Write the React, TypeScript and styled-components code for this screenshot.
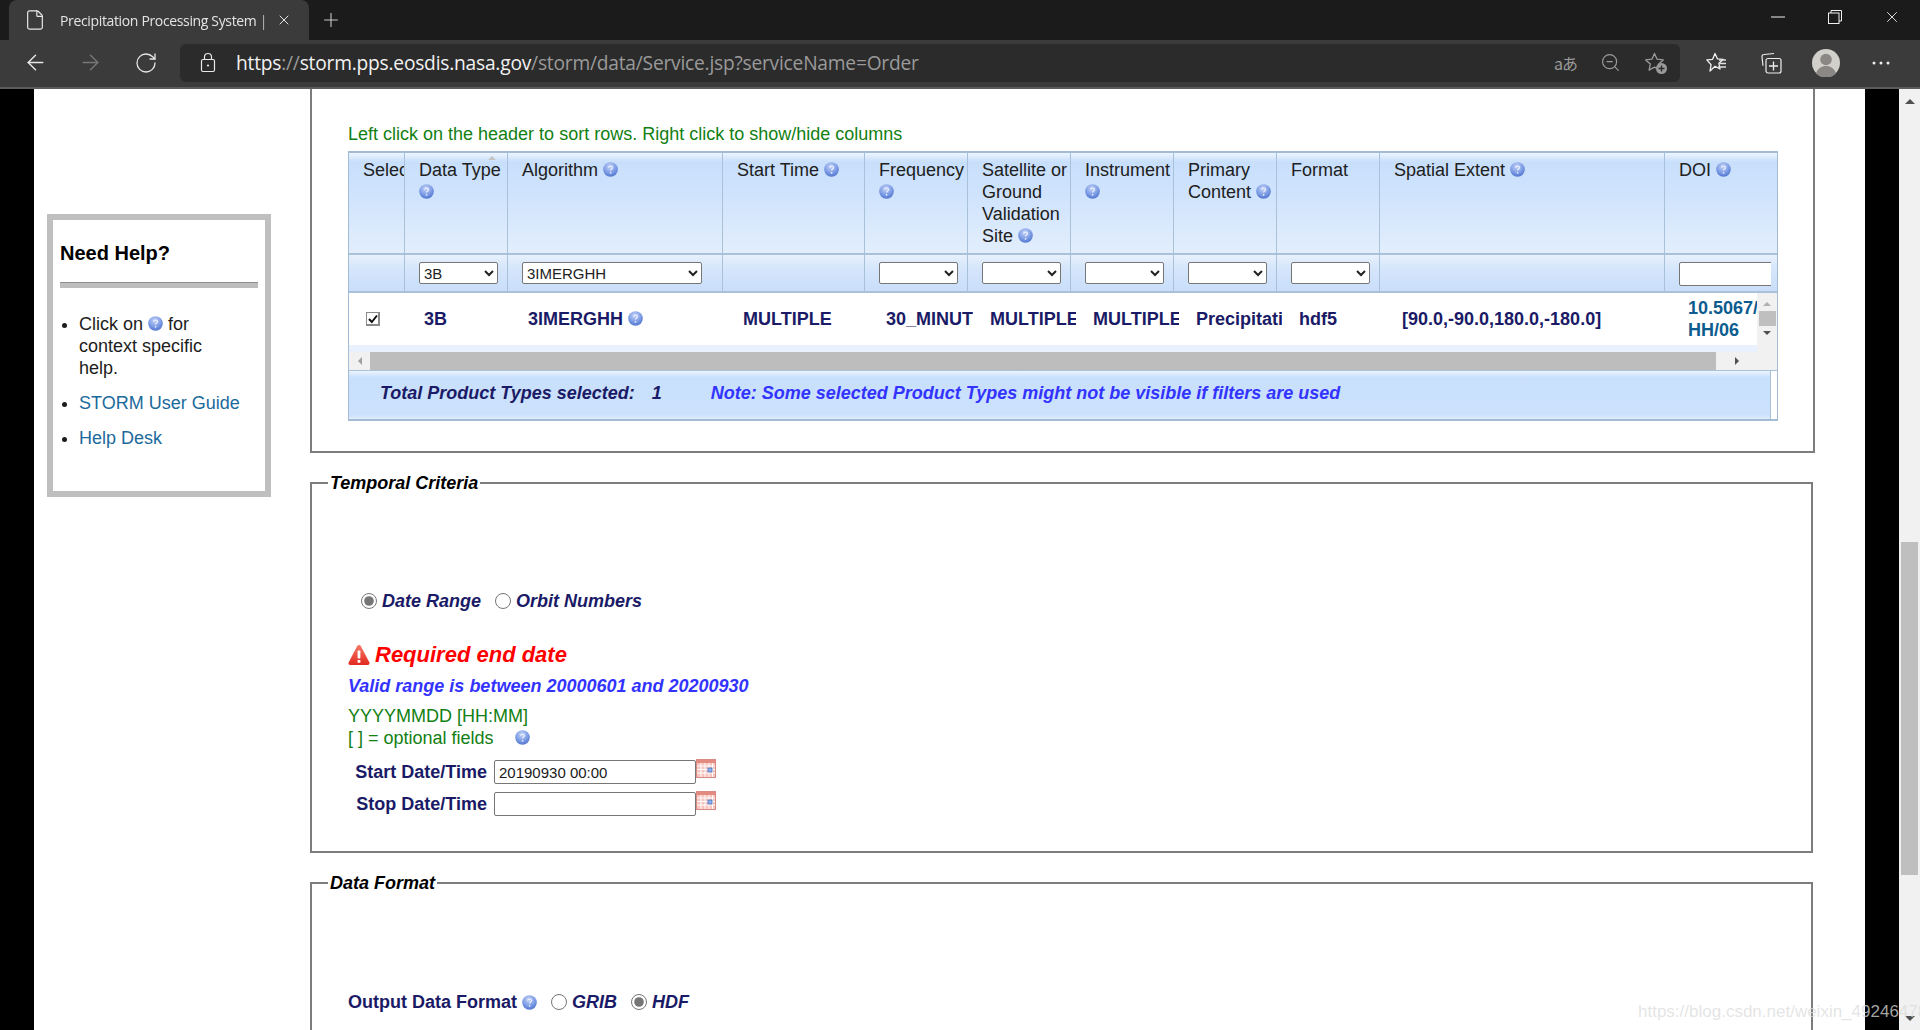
import React from "react";
import styled, { createGlobalStyle } from "styled-components";
import { ArrowLeft, ArrowRight, File as FileIcon, Plus, RotateCw, X, ZoomOut } from "lucide-react";

const Global = createGlobalStyle`
  html, body { margin: 0; padding: 0; height: 100%; overflow: hidden; background: #000; }
  body { font-family: "Liberation Sans", Arial, sans-serif; }
  * { box-sizing: border-box; }
`;

const Root = styled.div`
  position: relative;
  width: 1920px;
  height: 1030px;
  display: flex;
  flex-direction: column;
  overflow: hidden;
`;

/* ---------- browser chrome ---------- */
const TitleBar = styled.div`
  height: 40px;
  background: #1b1b1b;
  display: flex;
  align-items: stretch;
  color: #e8e8e8;
`;
const Tab = styled.div`
  margin-left: 9px;
  width: 300px;
  background: #3b3b3b;
  border-radius: 8px 8px 0 0;
  display: flex;
  align-items: center;
  padding: 0 14px 0 15px;
`;
const TabTitle = styled.span`
  margin-left: 14px;
  width: 216px;
  font: 14px "Open Sans", sans-serif;
  letter-spacing: -0.35px;
  color: #e4e4e4;
  white-space: nowrap;
  overflow: hidden;
  -webkit-mask-image: linear-gradient(90deg, #000 92%, transparent);
`;
const NewTab = styled.div`
  margin-left: 11px;
  display: flex;
  align-items: center;
  color: #c8c8c8;
`;
const WindowControls = styled.div`
  margin-left: auto;
  display: flex;
`;
const WindowButton = styled.div`
  width: 57px;
  display: flex;
  align-items: center;
  justify-content: center;
  padding-bottom: 6px;
  color: #f0f0f0;
`;
const Toolbar = styled.div`
  height: 49px;
  background: #3b3b3b;
  border-bottom: 2px solid #5c5c5c;
  display: flex;
  align-items: center;
  padding: 0 7px 2px 8px;
`;
const ToolButton = styled.div<{ $dim?: boolean }>`
  width: 55px;
  display: flex;
  align-items: center;
  justify-content: center;
  color: ${(p) => (p.$dim ? "#777" : "#e6e6e6")};
`;
const AddressBar = styled.div`
  margin: 0 8px 0 7px;
  width: 1500px;
  height: 38px;
  background: #2b2b2b;
  border-radius: 6px;
  display: flex;
  align-items: center;
  padding: 0 2px 0 20px;
`;
const Url = styled.div`
  margin-left: 20px;
  font: 19.2px "Open Sans", sans-serif;
  letter-spacing: -0.22px;
  color: #9a9a9a;
  white-space: nowrap;
`;
const UrlStrong = styled.span`
  color: #f2f2f2;
`;
const AddressIcons = styled.div`
  margin-left: auto;
  display: flex;
`;
const AddressIcon = styled.div`
  width: 45px;
  display: flex;
  align-items: center;
  justify-content: center;
  color: #9a9a9a;
`;
const TranslateGlyph = styled.span`
  font: 16px "Noto Sans CJK JP", "Noto Sans", sans-serif;
  letter-spacing: -1px;
  color: #9a9a9a;
`;

/* ---------- page ---------- */
const Viewport = styled.div`
  flex: 1;
  min-height: 0;
  display: flex;
  background: #000;
`;
const WhitePage = styled.div`
  margin-left: 34px;
  width: 1831px;
  background: #fff;
  display: flex;
  overflow: hidden;
`;
const PageScroll = styled.div`
  margin-left: 34px;
  width: 21px;
  background: #f1f1f1;
  display: flex;
  flex-direction: column;
  align-items: center;
`;
const Tri = styled.span<{ $dir: "up" | "down" | "left" | "right"; $size?: number; $color?: string }>`
  display: block;
  width: 0;
  height: 0;
  border: ${(p) => p.$size ?? 5}px solid transparent;
  ${(p) => {
    const c = p.$color ?? "#505050";
    const s = p.$size ?? 5;
    if (p.$dir === "up") return `border-top-width:0;border-bottom:${s}px solid ${c};`;
    if (p.$dir === "down") return `border-bottom-width:0;border-top:${s}px solid ${c};`;
    if (p.$dir === "left") return `border-left-width:0;border-right:${s}px solid ${c};`;
    return `border-right-width:0;border-left:${s}px solid ${c};`;
  }}
`;
const PageArrow = styled.div`
  height: 24px;
  flex: none;
  display: flex;
  align-items: center;
  justify-content: center;
`;
const PageTrack = styled.div`
  flex: 1;
  align-self: stretch;
  padding: 429px 2px 0;
`;
const PageThumb = styled.div`
  height: 333px;
  background: #bfbfbf;
`;

/* ---------- side help ---------- */
const Sidebar = styled.aside`
  width: 276px;
  flex: none;
  padding: 125px 0 0 13px;
`;
const HelpBox = styled.div`
  width: 224px;
  height: 283px;
  border: 6px solid #bfbfbf;
  padding: 20px 7px 0;
`;
const HelpTitle = styled.h3`
  margin: 0;
  font-size: 20px;
  line-height: 26px;
  font-weight: bold;
  color: #000;
`;
const HelpRule = styled.div`
  margin-top: 16px;
  height: 6px;
  background: #bdbdbd;
  border-top: 1px solid #8f8f8f;
`;
const HelpList = styled.ul`
  margin: 25px 0 0;
  padding: 0 0 0 19px;
  font-size: 18px;
  line-height: 22px;
  color: #1c1c1c;
`;
const HelpItem = styled.li`
  margin-bottom: 13px;
  white-space: nowrap;
`;
const HelpLink = styled.a`
  color: #1b6a9c;
  text-decoration: none;
`;

/* ---------- main ---------- */
const Main = styled.main`
  width: 1505px;
  flex: none;
`;
const ProductBox = styled.section`
  border: 2px solid #7d7d7d;
  border-top: none;
  padding: 34px 36px 30px;
`;
const HintLine = styled.div`
  font-size: 18px;
  line-height: 22px;
  color: #128012;
  white-space: nowrap;
`;
const Frame = styled.div`
  margin-top: 6px;
  width: 1430px;
  height: 270px;
  margin-left: 0;
  border: 1px solid #a3bcd4;
  border-top-width: 2px;
  border-bottom-width: 2px;
  background: #fff;
  display: flex;
  flex-direction: column;
`;
const COLS = "56px 103px 215px 142px 103px 103px 103px 103px 103px 285px 106px";
const HeadRow = styled.div`
  display: grid;
  grid-template-columns: ${COLS};
  height: 102px;
  border-bottom: 2px solid #a9c2da;
  background: linear-gradient(#edf5ff 0, #c8dffb 9%, #cfe3fd 40%, #e2eefc 100%);
  color: #202020;
  font-size: 18px;
  line-height: 22px;
`;
const HeadCell = styled.div`
  position: relative;
  padding: 6px 0 0 14px;
  overflow: hidden;
  border-right: 1px solid #a9c2da;
  &:last-child { border-right: none; }
`;
const SortMark = styled.span`
  position: absolute;
  left: 83px;
  top: 3px;
`;
const FilterRow = styled.div`
  display: grid;
  grid-template-columns: ${COLS};
  height: 38px;
  border-bottom: 2px solid #a9c2da;
  background: linear-gradient(#e8f1fd 0, #d6e6fb 35%, #c9defa 100%);
`;
const FilterCell = styled.div`
  padding: 7px 0 0 14px;
  overflow: hidden;
  border-right: 1px solid #a9c2da;
  &:last-child { border-right: none; }
`;
const FilterSelect = styled.select<{ $w?: number }>`
  display: block;
  width: ${(p) => p.$w ?? 79}px;
  height: 22px;
  font: 15px "Liberation Sans", sans-serif;
  color: #222;
  background: #fff;
  border: 1px solid #767676;
  border-radius: 2px;
  padding: 0;
`;
const FilterInput = styled.input`
  display: block;
  width: 120px;
  height: 24px;
  background: #fff;
  border: 1px solid #767676;
  border-radius: 2px;
`;
const BodyArea = styled.div`
  height: 59px;
  display: flex;
`;
const BodyMain = styled.div`
  flex: 1;
  min-width: 0;
  display: flex;
  flex-direction: column;
`;
const DataRow = styled.div`
  height: 52px;
  display: grid;
  grid-template-columns: 41px 87px 198px 126px 87px 86px 86px 86px 86px 269px 69px;
  column-gap: 17px;
  padding-left: 17px;
  align-items: center;
  font-size: 18px;
  line-height: 22px;
  font-weight: bold;
  color: #1a1a66;
`;
const DataCell = styled.div<{ $link?: boolean }>`
  overflow: hidden;
  white-space: nowrap;
  ${(p) => p.$link && "color:#0d5c8f;margin-top:-1px;"}
`;
const RowStrip = styled.div`
  flex: 1;
  background: #e8f1fd;
`;
const CheckBox = styled.span`
  display: flex;
  width: 14px;
  height: 14px;
  background: #fff;
  border: 2px solid #8a8a8a;
  border-left-width: 1px;
  border-top-width: 1px;
  align-items: center;
  justify-content: center;
`;
const VScroll = styled.div`
  width: 20px;
  flex: none;
  background: #f1f1f1;
  display: flex;
  flex-direction: column;
  align-items: center;
  padding-top: 9px;
`;
const VThumb = styled.div`
  margin: 5px 0 5px;
  width: 17px;
  height: 15px;
  background: #bfbfbf;
`;
const HScroll = styled.div`
  height: 19px;
  flex: none;
  display: flex;
  background: #f1f1f1;
  border-bottom: 1px solid #a9c2da;
`;
const HButton = styled.div<{ $w: number }>`
  width: ${(p) => p.$w}px;
  flex: none;
  display: flex;
  align-items: center;
  justify-content: center;
`;
const HThumb = styled.div`
  flex: 1;
  background: #bdbdbd;
`;
const Footer = styled.div`
  flex: 1;
  margin-right: 6px;
  border-right: 1px solid #a9c2da;
  background: linear-gradient(#ecf4ff 0, #c9e0fc 14%, #cbe1fc 90%, #e0edfd 100%);
  display: flex;
  align-items: center;
  padding: 0 0 3px 31px;
  font-size: 18px;
  font-weight: bold;
  font-style: italic;
  color: #1a1a66;
  white-space: nowrap;
`;
const FooterCount = styled.span`
  margin-left: 17px;
`;
const FooterNote = styled.span`
  margin-left: 49px;
  color: #3333ff;
`;

const Group = styled.fieldset`
  margin: 19px 0 0;
  width: 1503px;
  min-width: 0;
  padding: 0 36px 35px;
  border: 2px solid #7d7d7d;
`;
const GroupTitle = styled.legend`
  margin-left: -20px;
  padding: 0 2px;
  font-size: 18px;
  line-height: 22px;
  font-weight: bold;
  font-style: italic;
  color: #000;
`;
const RadioRow = styled.div<{ $top: number; $left?: number }>`
  margin-top: ${(p) => p.$top}px;
  padding-left: ${(p) => p.$left ?? 0}px;
  height: 22px;
  display: flex;
  align-items: center;
  font-size: 18px;
  font-weight: bold;
  color: #1a1a66;
`;
const Radio = styled.input.attrs({ type: "radio" })<{ $gap?: number }>`
  margin: 0 5px 0 ${(p) => p.$gap ?? 0}px;
  width: 16px;
  height: 16px;
  accent-color: #767676;
`;
const RadioText = styled.span`
  font-style: italic;
`;
const ErrorRow = styled.div`
  margin-top: 30px;
  height: 26px;
  display: flex;
  align-items: center;
  font-size: 22px;
  font-weight: bold;
  font-style: italic;
  color: #ff0000;
`;
const ErrorText = styled.span`
  margin-left: 5px;
`;
const RangeLine = styled.div`
  margin-top: 7px;
  font-size: 18px;
  line-height: 22px;
  font-weight: bold;
  font-style: italic;
  color: #3333ff;
`;
const FormatNote = styled.div`
  margin-top: 8px;
  font-size: 18px;
  line-height: 22px;
  color: #128012;
`;
const OptionalIcon = styled.span`
  margin-left: 21px;
`;
const DateRow = styled.div<{ $top: number }>`
  margin-top: ${(p) => p.$top}px;
  display: flex;
  height: 24px;
  align-items: flex-start;
`;
const DateLabel = styled.label`
  width: 139px;
  text-align: right;
  font-size: 18px;
  line-height: 24px;
  font-weight: bold;
  color: #1a1a66;
`;
const DateInput = styled.input`
  margin-left: 7px;
  width: 202px;
  height: 24px;
  padding: 1px 4px;
  font: 15px "Liberation Sans", sans-serif;
  color: #1a1a1a;
  background: #fff;
  border: 1px solid #767676;
  border-radius: 2px;
`;
const CalendarSvg = styled.svg`
  display: block;
  margin-top: -1px;
  flex: none;
`;
const OutputLabel = styled.span`
  white-space: nowrap;
`;
const FormatGroupBody = styled.div`
  height: 110px;
`;
const Watermark = styled.div`
  position: absolute;
  left: 1638px;
  top: 1002px;
  font-size: 17px;
  line-height: 20px;
  color: rgba(220, 220, 220, 0.75);
  white-space: nowrap;
`;
const HelpGlyph = styled.svg<{ $ml?: number }>`
  display: inline-block;
  vertical-align: -1px;
  margin-left: ${(p) => p.$ml ?? 0}px;
`;

const Help = ({ ml = 0 }: { ml?: number }) => (
  <HelpGlyph $ml={ml} width="15" height="15" viewBox="0 0 15 15" aria-hidden>
    <defs>
      <radialGradient id="helpBall" cx="45%" cy="30%" r="75%">
        <stop offset="0" stopColor="#c6d4f6" />
        <stop offset="0.55" stopColor="#7f9ee6" />
        <stop offset="1" stopColor="#4a6fcb" />
      </radialGradient>
    </defs>
    <circle cx="7.5" cy="7.5" r="7.3" fill="url(#helpBall)" />
    <path d="M5.6 5.7c.2-1.1 1-1.6 2-1.6s1.9.6 1.9 1.5c0 1.3-1.8 1.4-1.9 2.9" fill="none" stroke="#e8eeff" strokeWidth="1.3" />
    <circle cx="7.6" cy="10.8" r=".9" fill="#e8eeff" />
  </HelpGlyph>
);

const Calendar = () => (
  <CalendarSvg width="20" height="19" viewBox="0 0 20 19" aria-hidden>
    <rect x=".5" y=".5" width="19" height="18" fill="#f6c3bd" stroke="#d98a82" />
    <rect x="1" y="1" width="18" height="3" fill="#e58a80" />
    <path d="M1 7h18M1 10.5h18M1 14h18M5 4v14M9 4v14M13 4v14M16.5 4v14" stroke="#fff" strokeWidth="1" />
    <rect x="12" y="9" width="4" height="4" fill="#8fb0e8" stroke="#4a72c4" strokeWidth=".8" />
  </CalendarSvg>
);

const Warning = () => (
  <svg width="22" height="22" viewBox="0 0 22 22" aria-hidden>
    <defs>
      <linearGradient id="warn" x1="0" y1="0" x2="0" y2="1">
        <stop offset="0" stopColor="#f87a68" />
        <stop offset="1" stopColor="#e02a20" />
      </linearGradient>
    </defs>
    <path d="M11 1c.8 0 1.4.5 1.9 1.3l8.4 16c.6 1.3-.1 2.7-1.5 2.7H2.2C.8 21 .1 19.600.7 18.300l8.400-16C9.600 1.500 10.200 1 11 1z" fill="url(#warn)" />
    <rect x="9.600" y="6.500" width="2.800" height="8" rx=".8" fill="#fff" />
    <rect x="9.600" y="16" width="2.800" height="2.800" rx=".6" fill="#fff" />
  </svg>
);

const StarAdd = () => (
  <svg width="24" height="24" viewBox="0 0 24 24" fill="none" aria-hidden>
    <path d="M10.500 2.500l2.600 5.700 6.200.7-4.600 4.200 1.200 6-5.400-3-5.400 3 1.200-6L1.700 8.900l6.200-.7z" stroke="#9a9a9a" strokeWidth="1.300" strokeLinejoin="round" />
    <circle cx="17.500" cy="17.500" r="5.500" fill="#9a9a9a" />
    <path d="M17.500 14.500v6M14.500 17.500h6" stroke="#2b2b2b" strokeWidth="1.400" />
  </svg>
);
const StarList = () => (
  <svg width="22" height="22" viewBox="0 0 22 22" fill="none" aria-hidden>
    <path d="M10 1.500l2.400 5.300 5.800.6-4.300 3.900 1.100 5.700-5-2.800L5 19l1.100-6.300L1.800 7.900l5.800-.6z" stroke="#f0f0f0" strokeWidth="1.300" strokeLinejoin="round" />
    <path d="M14 8h7M14.500 11.500h6.500M13 15h8" stroke="#e0e0e0" strokeWidth="1.300" />
  </svg>
);
const Collections = () => (
  <svg width="22" height="22" viewBox="0 0 22 22" fill="none" aria-hidden>
    <path d="M14 1.500l-10 1a2 2 0 0 0-2 2.300l1 9" stroke="#eee" strokeWidth="1.200" />
    <rect x="6" y="6.500" width="15" height="14.500" rx="2" stroke="#eee" strokeWidth="1.200" />
    <path d="M13.500 9.500v9M9 14h9" stroke="#eee" strokeWidth="1.300" />
  </svg>
);
const Avatar = () => (
  <svg width="28" height="28" viewBox="0 0 28 28" aria-hidden>
    <circle cx="14" cy="14" r="14" fill="#d2d0cb" />
    <circle cx="14" cy="10.500" r="5.800" fill="#8a8784" />
    <path d="M4 24.500c1.500-5 5.500-7.500 10-7.500s8.500 2.500 10 7.500A14 14 0 0 1 4 24.500z" fill="#8a8784" />
  </svg>
);
const Dots = () => (
  <svg width="18" height="6" viewBox="0 0 18 6" aria-hidden>
    <circle cx="2" cy="3" r="1.500" fill="#eee" />
    <circle cx="9" cy="3" r="1.500" fill="#eee" />
    <circle cx="16" cy="3" r="1.500" fill="#eee" />
  </svg>
);
const LockGlyph = () => (
  <svg width="16" height="21" viewBox="0 0 16 21" fill="none" aria-hidden>
    <rect x="1.500" y="7.500" width="13" height="12" rx="1.500" stroke="#e8e8e8" strokeWidth="1.200" />
    <path d="M4.500 7.500V5a3.500 3.500 0 0 1 7 0v2.500" stroke="#e8e8e8" strokeWidth="1.200" />
    <circle cx="8" cy="13.500" r="1.100" fill="#e8e8e8" />
  </svg>
);
const Restore = () => (
  <svg width="14" height="14" viewBox="0 0 14 14" fill="none" aria-hidden>
    <rect x=".5" y="3" width="10.500" height="10.500" stroke="#f0f0f0" />
    <path d="M3 3V.5h10.500V11H11" stroke="#f0f0f0" />
  </svg>
);
const Minimize = () => (
  <svg width="14" height="2" viewBox="0 0 14 2" aria-hidden>
    <path d="M0 1h14" stroke="#f0f0f0" />
  </svg>
);
const Check = () => (
  <svg width="10" height="10" viewBox="0 0 10 10" fill="none" aria-hidden>
    <path d="M1 5l2.800 3L9 1.500" stroke="#111" strokeWidth="2" />
  </svg>
);

const headers: { label: React.ReactNode; help?: boolean; sort?: boolean }[] = [
  { label: "Selec" },
  { label: "Data Type", help: true, sort: true },
  { label: "Algorithm", help: true },
  { label: "Start Time", help: true },
  { label: "Frequency", help: true },
  { label: "Satellite or Ground Validation Site", help: true },
  { label: "Instrument", help: true },
  { label: "Primary Content", help: true },
  { label: "Format" },
  { label: "Spatial Extent", help: true },
  { label: "DOI", help: true },
];

export default function App() {
  return (
    <Root>
      <Global />
      <TitleBar>
        <Tab>
          <FileIcon size={22} strokeWidth={1.3} />
          <TabTitle>Precipitation Processing System |</TabTitle>
          <X size={16} strokeWidth={1.5} />
        </Tab>
        <NewTab>
          <Plus size={22} strokeWidth={1.2} />
        </NewTab>
        <WindowControls>
          <WindowButton><Minimize /></WindowButton>
          <WindowButton><Restore /></WindowButton>
          <WindowButton><X size={18} strokeWidth={1.2} /></WindowButton>
        </WindowControls>
      </TitleBar>
      <Toolbar>
        <ToolButton><ArrowLeft size={25} strokeWidth={1.4} /></ToolButton>
        <ToolButton $dim><ArrowRight size={25} strokeWidth={1.4} /></ToolButton>
        <ToolButton><RotateCw size={24} strokeWidth={1.3} /></ToolButton>
        <AddressBar>
          <LockGlyph />
          <Url>
            <UrlStrong>https</UrlStrong>://<UrlStrong>storm.pps.eosdis.nasa.gov</UrlStrong>/storm/data/Service.jsp?serviceName=Order
          </Url>
          <AddressIcons>
            <AddressIcon><TranslateGlyph>aあ</TranslateGlyph></AddressIcon>
            <AddressIcon><ZoomOut size={21} strokeWidth={1.3} /></AddressIcon>
            <AddressIcon><StarAdd /></AddressIcon>
          </AddressIcons>
        </AddressBar>
        <ToolButton><StarList /></ToolButton>
        <ToolButton><Collections /></ToolButton>
        <ToolButton><Avatar /></ToolButton>
        <ToolButton><Dots /></ToolButton>
      </Toolbar>
      <Viewport>
        <WhitePage>
          <Sidebar>
            <HelpBox>
              <HelpTitle>Need Help?</HelpTitle>
              <HelpRule />
              <HelpList>
                <HelpItem>
                  Click on <Help /> for
                  <br />
                  context specific
                  <br />
                  help.
                </HelpItem>
                <HelpItem><HelpLink>STORM User Guide</HelpLink></HelpItem>
                <HelpItem><HelpLink>Help Desk</HelpLink></HelpItem>
              </HelpList>
            </HelpBox>
          </Sidebar>
          <Main>
            <ProductBox>
              <HintLine>Left click on the header to sort rows. Right click to show/hide columns</HintLine>
              <Frame>
                <HeadRow>
                  {headers.map((h, i) => (
                    <HeadCell key={i}>
                      {h.label}
                      {h.help && <> <Help /></>}
                      {h.sort && (
                        <SortMark>
                          <Tri $dir="up" $size={4} $color="#c4c4c4" />
                        </SortMark>
                      )}
                    </HeadCell>
                  ))}
                </HeadRow>
                <FilterRow>
                  <FilterCell />
                  <FilterCell>
                    <FilterSelect defaultValue="3B"><option>3B</option></FilterSelect>
                  </FilterCell>
                  <FilterCell>
                    <FilterSelect $w={180} defaultValue="3IMERGHH"><option>3IMERGHH</option></FilterSelect>
                  </FilterCell>
                  <FilterCell />
                  {[0, 1, 2, 3, 4].map((k) => (
                    <FilterCell key={k}>
                      <FilterSelect><option></option></FilterSelect>
                    </FilterCell>
                  ))}
                  <FilterCell />
                  <FilterCell><FilterInput /></FilterCell>
                </FilterRow>
                <BodyArea>
                  <BodyMain>
                    <DataRow>
                      <DataCell><CheckBox><Check /></CheckBox></DataCell>
                      <DataCell>3B</DataCell>
                      <DataCell>3IMERGHH <Help /></DataCell>
                      <DataCell>MULTIPLE</DataCell>
                      <DataCell>30_MINUTE</DataCell>
                      <DataCell>MULTIPLE</DataCell>
                      <DataCell>MULTIPLE</DataCell>
                      <DataCell>Precipitation</DataCell>
                      <DataCell>hdf5</DataCell>
                      <DataCell>[90.0,-90.0,180.0,-180.0]</DataCell>
                      <DataCell $link>10.5067/<br />HH/06</DataCell>
                    </DataRow>
                    <RowStrip />
                  </BodyMain>
                  <VScroll>
                    <Tri $dir="up" $size={4} $color="#b0b0b0" />
                    <VThumb />
                    <Tri $dir="down" $size={4} $color="#505050" />
                  </VScroll>
                </BodyArea>
                <HScroll>
                  <HButton $w={21}><Tri $dir="left" $size={4} $color="#a0a0a0" /></HButton>
                  <HThumb />
                  <HButton $w={41}><Tri $dir="right" $size={4} $color="#505050" /></HButton>
                  <HButton $w={20} />
                </HScroll>
                <Footer>
                  Total Product Types selected:
                  <FooterCount>1</FooterCount>
                  <FooterNote>Note: Some selected Product Types might not be visible if filters are used</FooterNote>
                </Footer>
              </Frame>
            </ProductBox>

            <Group>
              <GroupTitle>Temporal Criteria</GroupTitle>
              <RadioRow $top={96} $left={13}>
                <Radio name="range" defaultChecked />
                <RadioText>Date Range</RadioText>
                <Radio name="range" $gap={14} />
                <RadioText>Orbit Numbers</RadioText>
              </RadioRow>
              <ErrorRow>
                <Warning />
                <ErrorText>Required end date</ErrorText>
              </ErrorRow>
              <RangeLine>Valid range is between 20000601 and 20200930</RangeLine>
              <FormatNote>
                YYYYMMDD [HH:MM]
                <br />
                [ ] = optional fields<OptionalIcon><Help /></OptionalIcon>
              </FormatNote>
              <DateRow $top={11}>
                <DateLabel>Start Date/Time</DateLabel>
                <DateInput defaultValue="20190930 00:00" />
                <Calendar />
              </DateRow>
              <DateRow $top={8}>
                <DateLabel>Stop Date/Time</DateLabel>
                <DateInput />
                <Calendar />
              </DateRow>
            </Group>

            <Group>
              <GroupTitle>Data Format</GroupTitle>
              <RadioRow $top={97}>
                <OutputLabel>Output Data Format</OutputLabel>
                <Help ml={5} />
                <Radio name="fmt" $gap={14} />
                <RadioText>GRIB</RadioText>
                <Radio name="fmt" $gap={14} defaultChecked />
                <RadioText>HDF</RadioText>
              </RadioRow>
              <FormatGroupBody />
            </Group>
          </Main>
        </WhitePage>
        <PageScroll>
          <PageArrow><Tri $dir="up" /></PageArrow>
          <PageTrack><PageThumb /></PageTrack>
          <PageArrow><Tri $dir="down" /></PageArrow>
        </PageScroll>
      </Viewport>
      <Watermark>https://blog.csdn.net/weixin_49246478</Watermark>
    </Root>
  );
}
